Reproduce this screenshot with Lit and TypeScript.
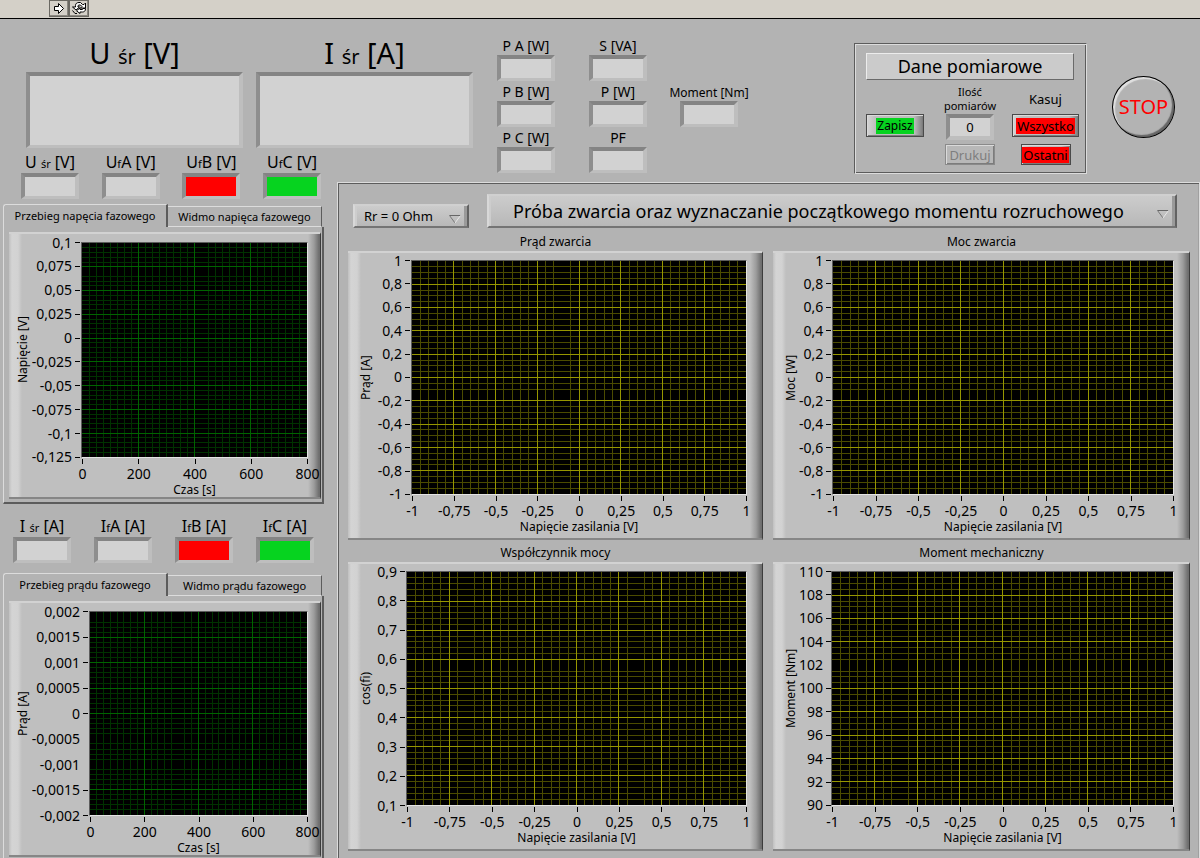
import { LitElement, html, svg, css, nothing } from "lit";
import { customElement, property } from "lit/decorators.js";
import { classMap } from "lit/directives/class-map.js";
import { styleMap } from "lit/directives/style-map.js";

interface Axis {
  title: string;
  labels: string[];
  /** minor intervals between two labelled values */
  minor: number;
  /** grid lines that are not painted, counted in minor steps */
  skip: number[];
}

interface GraphSpec {
  x: Axis;
  y: Axis;
  /** width of the strip left of the plot, frame included */
  gutter: number;
  tone: "green" | "yellow";
}

const voltageAxis = (skip: number[]): Axis => ({
  title: "Napięcie zasilania [V]",
  labels: ["-1", "-0,75", "-0,5", "-0,25", "0", "0,25", "0,5", "0,75", "1"],
  minor: 5,
  skip,
});

const timeAxis = (skip: number[]): Axis => ({
  title: "Czas [s]",
  labels: ["0", "200", "400", "600", "800"],
  minor: 8,
  skip,
});

const unitLabels = ["1", "0,8", "0,6", "0,4", "0,2", "0", "-0,2", "-0,4", "-0,6", "-0,8", "-1"];

const phaseVoltage: GraphSpec = {
  x: timeAxis([17]),
  y: {
    title: "Napięcie [V]",
    labels: ["0,1", "0,075", "0,05", "0,025", "0", "-0,025", "-0,05", "-0,075", "-0,1", "-0,125"],
    minor: 5,
    skip: [6],
  },
  gutter: 72,
  tone: "green",
};

const phaseCurrent: GraphSpec = {
  x: timeAxis([13]),
  y: {
    title: "Prąd [A]",
    labels: ["0,002", "0,0015", "0,001", "0,0005", "0", "-0,0005", "-0,001", "-0,0015", "-0,002"],
    minor: 5,
    skip: [1, 25, 30],
  },
  gutter: 80,
  tone: "green",
};

const charts: { title: string; spec: GraphSpec }[] = [
  {
    title: "Prąd zwarcia",
    spec: { x: voltageAxis([18]), y: { title: "Prąd [A]", labels: unitLabels, minor: 4, skip: [23] }, gutter: 63, tone: "yellow" },
  },
  {
    title: "Moc zwarcia",
    spec: { x: voltageAxis([]), y: { title: "Moc [W]", labels: unitLabels, minor: 4, skip: [23] }, gutter: 59, tone: "yellow" },
  },
  {
    title: "Współczynnik mocy",
    spec: {
      x: voltageAxis([7, 27]),
      y: { title: "cos(fi)", labels: ["0,9", "0,8", "0,7", "0,6", "0,5", "0,4", "0,3", "0,2", "0,1"], minor: 5, skip: [16] },
      gutter: 58,
      tone: "yellow",
    },
  },
  {
    title: "Moment mechaniczny",
    spec: {
      x: voltageAxis([8]),
      y: {
        title: "Moment [Nm]",
        labels: ["110", "108", "106", "104", "102", "100", "98", "96", "94", "92", "90"],
        minor: 4,
        skip: [16],
      },
      gutter: 58,
      tone: "yellow",
    },
  },
];

@customElement("xy-graph")
export class XyGraph extends LitElement {
  @property({ attribute: false }) declare spec: GraphSpec;

  static styles = css`
    :host {
      display: block;
    }
    .frame {
      box-sizing: border-box;
      height: 100%;
      display: grid;
      grid-template-rows: 1fr auto auto;
      border-top: 2px solid #d2d2d2;
      border-right: 1px solid #3c3c3c;
      border-bottom: 2px solid #868686;
      background:
        linear-gradient(to right, #c0c0c0, #d4d4d4 3px, #d2d2d2 9px, #bfbfbf 13px) left / 14px 100% no-repeat,
        linear-gradient(to right, #bfbfbf, #9c9c9c 6px, #6e6e6e 11px) right / 12px 100% no-repeat,
        #bfbfbf;
      font: 14px/16px "Noto Sans", sans-serif;
      color: #000;
    }
    .frame.yellow {
      padding: 7px 15px 4px 0;
    }
    .frame.green {
      padding: 8px 12px 0 0;
    }
    .left {
      display: flex;
      min-width: 0;
      padding-left: 10px;
    }
    .green .left {
      padding-left: 6px;
    }
    .ytitle {
      writing-mode: vertical-rl;
      transform: rotate(180deg);
      text-align: center;
      font-size: 12px;
      line-height: 16px;
      white-space: nowrap;
    }
    .yaxis {
      flex: 1;
      display: flex;
      flex-direction: column;
      justify-content: space-between;
    }
    .ylabel {
      height: 1px;
      display: flex;
      align-items: center;
      justify-content: flex-end;
      gap: 3px;
      white-space: nowrap;
    }
    .ytick {
      width: 5px;
      height: 1px;
      margin-right: 1px;
      background: #000;
    }
    .off {
      background: none;
    }
    .plot {
      border: 1px solid;
      border-color: #5c5c5c #e4e4e4 #e4e4e4 #5c5c5c;
      background: #000;
      min-height: 0;
    }
    svg {
      display: block;
      width: 100%;
      height: 100%;
    }
    .fine,
    .bold {
      stroke-width: 1;
      shape-rendering: crispEdges;
    }
    .green .fine {
      stroke: #003200;
    }
    .green .bold {
      stroke: #006400;
    }
    .yellow .fine {
      stroke: #4b4b00;
    }
    .yellow .bold {
      stroke: #969600;
    }
    .xaxis {
      grid-column: 2;
      display: flex;
      justify-content: space-between;
      padding: 1px 0 0 1px;
      height: 24px;
      box-sizing: border-box;
    }
    .xlabel {
      width: 1px;
      display: flex;
      flex-direction: column;
      align-items: center;
      gap: 2px;
      white-space: nowrap;
    }
    .xtick {
      width: 1px;
      height: 5px;
      flex: none;
      background: #000;
    }
    .xtitle {
      grid-column: 2;
      text-align: center;
      font-size: 12px;
      line-height: 15px;
      white-space: nowrap;
    }
  `;

  private lines(axis: Axis, vertical: boolean, bold: boolean) {
    const total = (axis.labels.length - 1) * axis.minor;
    return Array.from({ length: total - 1 }, (_, i) => i + 1)
      .filter((i) => !axis.skip.includes(i) && (i % axis.minor === 0) === bold)
      .map((i) => {
        const at = `${(i / total) * 100}%`;
        const cls = bold ? "bold" : "fine";
        return vertical
          ? svg`<line class=${cls} x1=${at} x2=${at} y1="0" y2="100%"></line>`
          : svg`<line class=${cls} y1=${at} y2=${at} x1="0" x2="100%"></line>`;
      });
  }

  render() {
    const { x, y, gutter, tone } = this.spec;
    return html`
      <div class="frame ${tone}" style=${styleMap({ gridTemplateColumns: `${gutter}px minmax(0, 1fr)` })}>
        <div class="left">
          <div class="ytitle">${y.title}</div>
          <div class="yaxis">
            ${y.labels.map(
              (label, i) => html`
                <div class="ylabel">
                  <span>${label}</span>
                  <span class=${classMap({ ytick: true, off: y.skip.includes(i * y.minor) })}></span>
                </div>
              `
            )}
          </div>
        </div>
        <div class="plot">
          <svg aria-hidden="true">
            ${this.lines(x, true, false)} ${this.lines(y, false, false)}
            ${this.lines(x, true, true)} ${this.lines(y, false, true)}
          </svg>
        </div>
        <div class="xaxis">
          ${x.labels.map((label) => html`<div class="xlabel"><span class="xtick"></span><span>${label}</span></div>`)}
        </div>
        <div class="xtitle">${x.title}</div>
      </div>
    `;
  }
}

type Tone = "" | "red" | "green";

const sub = (lead: string, small: string, tail: string) => html`${lead}<small>${small}</small>${tail}`;

@customElement("app-root")
export class AppRoot extends LitElement {
  static styles = css`
    :host {
      display: flex;
      flex-direction: column;
      height: 100vh;
      overflow: hidden;
      background: #b3b3b3;
      color: #000;
      font: 14px/16px "Noto Sans", sans-serif;
    }
    button,
    input,
    select {
      font: inherit;
      color: inherit;
      margin: 0;
      padding: 0;
      border-radius: 0;
      box-sizing: border-box;
    }
    .toolbar {
      flex: none;
      display: flex;
      height: 18px;
      padding-left: 49px;
      background: #d4d0c8;
      border-bottom: 1px solid #000;
    }
    .tool {
      width: 20px;
      height: 17px;
      border: 1px solid;
      border-color: #d4d0c8 #404040 #404040 #f4f2ee;
      border-top: 0;
      background: #d4d0c8;
      box-shadow: inset -1px -1px 0 #8a8780;
      outline: 1px solid #6a6862;
      outline-offset: -1px;
    }
    .tool svg {
      display: block;
      margin: 0 auto;
    }
    .desk {
      flex: 1;
      min-height: 0;
      display: grid;
      grid-template-columns: 337px 137px minmax(0, 1fr);
      grid-template-rows: 129px 34px minmax(0, 1fr);
    }
    .displays {
      grid-area: 1 / 1 / 2 / 3;
      display: flex;
      gap: 13px;
      padding: 15px 0 0 26px;
      align-items: flex-start;
    }
    .side {
      grid-area: 2 / 1 / 4 / 2;
      padding: 5px 13px 0 3px;
    }
    .header {
      grid-area: 1 / 3 / 3 / 4;
      display: flex;
      align-items: flex-start;
      padding: 0 25px 0 23px;
    }
    .panel {
      grid-area: 3 / 2 / 4 / 4;
    }

    /* numeric indicators */
    .ind {
      display: flex;
      flex-direction: column;
      align-items: center;
      width: 58px;
      font-size: 16px;
      line-height: 19px;
      white-space: nowrap;
    }
    .ind small {
      font-size: 11px;
    }
    .ind input {
      width: 58px;
      height: 26px;
      text-align: center;
      border: solid;
      border-width: 4px 4px 3px 4px;
      border-color: #848484 #bebebe #bebebe #8e8e8e;
      background: #d2d2d2;
      outline: none;
      font-size: 13px;
    }
    .ind .red {
      background: #ff0000;
    }
    .ind .green {
      background: #06d31f;
    }
    .ind.big {
      width: 217px;
      font-size: 29px;
      line-height: 38px;
    }
    .ind.big span {
      height: 38px;
    }
    .ind.big small {
      font-size: 20px;
    }
    .ind.big input {
      width: 217px;
      height: 76px;
    }
    .ind.note {
      font-size: 12px;
      line-height: 16px;
      width: 76px;
      margin: 66px 0 0 24px;
    }
    .readings {
      display: grid;
      grid-template-columns: 58px 58px;
      gap: 1px 34px;
      padding-top: 17px;
    }
    .readings .ind {
      font-size: 14px;
    }

    /* measurement data box */
    .data {
      box-sizing: border-box;
      width: 233px;
      margin: 24px 25px 0 auto;
      border: 1px solid;
      border-color: #5c5c5c #dcdcdc #dcdcdc #5c5c5c;
      box-shadow: inset 1px 1px 0 #dcdcdc, inset -1px -1px 0 #5c5c5c;
      padding: 9px 7px 8px 11px;
      display: grid;
      grid-template-columns: 62px minmax(0, 1fr) 67px;
      grid-template-rows: 27px 33px 27px 25px;
      column-gap: 8px;
      justify-items: center;
      align-items: end;
    }
    .data h1 {
      grid-column: 1 / -1;
      justify-self: stretch;
      align-self: start;
      box-sizing: border-box;
      height: 27px;
      margin: 0 5px 0 0;
      border: 1px solid;
      border-color: #ececec #6a6a6a #6a6a6a #ececec;
      background: #cbcbcb;
      font-size: 18px;
      font-weight: 400;
      line-height: 25px;
      text-align: center;
    }
    .count {
      grid-area: 2 / 2;
      font-size: 11px;
      line-height: 14px;
      text-align: center;
    }
    .clear {
      grid-area: 2 / 3;
      padding-bottom: 6px;
      font-size: 13px;
    }
    .data input {
      grid-area: 3 / 2;
      width: 48px;
      height: 26px;
      text-align: center;
      border: solid;
      border-width: 4px;
      border-color: #848484 #bebebe #bebebe #8e8e8e;
      background: #d2d2d2;
      outline: none;
      font-size: 13px;
    }
    .btn {
      height: 23px;
      border: 1px solid #4a4a4a;
      background: linear-gradient(to right, #d4d4d4, #bdbdbd 9px, #bdbdbd calc(100% - 9px), #7c7c7c);
      box-shadow: inset 1px 1px 0 #dadada, inset -1px -1px 0 #7c7c7c;
      line-height: 16px;
      display: flex;
      align-items: center;
      justify-content: center;
    }
    .btn span {
      padding: 0 1px;
    }
    .save {
      grid-area: 3 / 1;
      justify-self: start;
      width: 58px;
      margin-bottom: 3px;
      font-size: 12px;
    }
    .all {
      grid-area: 3 / 3;
      width: 67px;
      margin-bottom: 3px;
      font-size: 13px;
    }
    .print {
      grid-area: 4 / 2;
      width: 50px;
      height: 21px;
      border-color: #8a8a8a;
      background: #b8b8b8;
      color: #7e7e7e;
      font-size: 13px;
    }
    .last {
      grid-area: 4 / 3;
      width: 50px;
      height: 21px;
      font-size: 13px;
    }
    .save span {
      background: #06d31f;
    }
    .all span,
    .last span {
      background: #ff0000;
    }
    .stop {
      width: 63px;
      height: 62px;
      margin-top: 57px;
      border: 1px solid #000;
      border-radius: 50%;
      background: #b3b3b3;
      box-shadow: inset 2px 2px 1px #e0e0e0, inset -2px -2px 1px #666;
      color: #ff0000;
      font-size: 20px;
      line-height: 24px;
    }

    /* left column */
    .phases {
      display: flex;
      justify-content: space-between;
      padding: 0 3px 0 18px;
      margin-bottom: 5px;
    }
    .phases.shift {
      padding: 0 10px 0 10px;
      margin: 13px 0 10px;
    }
    .tabs {
      display: grid;
      grid-template-columns: 165px minmax(0, 1fr);
      align-items: end;
      margin-right: 2px;
    }
    .tab {
      height: 21px;
      border: 1px solid;
      border-color: #dcdcdc #5c5c5c #dcdcdc #dcdcdc;
      border-left: 0;
      background: #b3b3b3;
      font-size: 11px;
      line-height: 18px;
      white-space: nowrap;
    }
    .tab.on {
      height: 23px;
      border-left: 1px solid #dcdcdc;
      border-right: 2px solid #5c5c5c;
      border-bottom: 0;
      border-top-left-radius: 3px;
    }
    .page {
      border: solid;
      border-width: 0 2px 2px 1px;
      border-color: #dcdcdc #5c5c5c #5c5c5c #dcdcdc;
      padding: 5px 1px 3px 5px;
    }
    .page xy-graph {
      height: 267px;
    }
    .page.short xy-graph {
      height: 256px;
    }

    /* right panel */
    .panel {
      border: 1px solid;
      border-color: #dcdcdc #dcdcdc transparent #dcdcdc;
      border-bottom: 0;
      box-shadow: inset 1px 1px 0 #5c5c5c, inset -1px 0 0 #a0a0a0;
      padding: 11px 9px 0 10px;
      min-height: 0;
      overflow: hidden;
    }
    .pickers {
      display: flex;
      align-items: flex-end;
      gap: 18px;
      padding: 0 13px 0 5px;
      margin-bottom: 4px;
    }
    .picker {
      position: relative;
      display: flex;
    }
    .picker select {
      appearance: none;
      width: 100%;
      height: 24px;
      padding-left: 9px;
      border: solid;
      border-width: 2px;
      border-color: #d0d0d0 #626262 #747474 #d8d8d8;
      background: linear-gradient(#cccccc, #b8b8b8);
      box-shadow: inset 2px 0 0 #cdcdcd, inset -3px 0 0 #9a9a9a;
      font-size: 13px;
      outline: none;
    }
    .picker svg {
      position: absolute;
      right: 7px;
      bottom: 4px;
      pointer-events: none;
    }
    .load {
      flex: 0 0 116px;
    }
    .test {
      flex: 1;
      min-width: 0;
    }
    .test select {
      height: 34px;
      padding-left: 24px;
      font-size: 18px;
      line-height: 28px;
    }
    .test svg {
      bottom: 9px;
    }
    .charts {
      display: grid;
      grid-template-columns: minmax(0, 415fr) minmax(0, 417fr);
      column-gap: 10px;
      row-gap: 3px;
    }
    .chart h2 {
      margin: 0;
      font-size: 12px;
      font-weight: 400;
      line-height: 19px;
      text-align: center;
    }
    .chart xy-graph {
      height: 289px;
    }
  `;

  private indicator(label: unknown, tone: Tone = "", extra = "") {
    return html`
      <label class="ind ${extra}">
        <span>${label}</span>
        <input class=${tone || nothing} type="text" readonly />
      </label>
    `;
  }

  private tabs(active: string, other: string) {
    return html`
      <div class="tabs" role="tablist">
        <button class="tab on" type="button" role="tab" aria-selected="true">${active}</button>
        <button class="tab" type="button" role="tab" aria-selected="false">${other}</button>
      </div>
    `;
  }

  private arrow() {
    return html`<svg width="14" height="10" viewBox="0 0 14 10" aria-hidden="true">
      <path d="M1.5 1.5H12.5" stroke="#666" fill="none" />
      <path d="M1.5 1.5L7 9" stroke="#777" fill="none" />
      <path d="M12.5 1.5L7 9" stroke="#e6e6e6" fill="none" />
    </svg>`;
  }

  render() {
    return html`
      <div class="toolbar">
        <button class="tool" type="button" aria-label="Run">
          <svg width="12" height="13" viewBox="0 0 12 13">
            <path d="M1.5 4.5H5.5V1.5L10.5 6.5L5.5 11.5V8.5H1.5Z" fill="#fff" stroke="#000" />
          </svg>
        </button>
        <button class="tool" type="button" aria-label="Run Continuously">
          <svg width="16" height="14" viewBox="0 0 16 14">
            <path
              d="M4.5 6V4.5C4.5 2.5 6 1.5 8 1.5H9.5L11.5 3.5H13L14.5 2V7H9.5L11 5.5L9.5 4H8C7.5 4 7 4.5 7 5V6H8.5L5 9L1.5 6Z"
              fill="#fff"
              stroke="#000"
            />
            <path
              d="M14.5 8C14.5 10 13 11 11.5 11H9V12.5L5.5 9.8L9 7V8.5H11C11.8 8.5 12 8 12 7.5H14.5Z"
              fill="#fff"
              stroke="#000"
            />
            <path d="M1.5 9.5L4 12.5H6" fill="none" stroke="#000" />
          </svg>
        </button>
      </div>

      <main class="desk">
        <div class="displays">
          ${this.indicator(sub("U ", "śr", " [V]"), "", "big")} ${this.indicator(sub("I ", "śr", " [A]"), "", "big")}
        </div>

        <div class="header">
          <div class="readings">
            ${["P A [W]", "S [VA]", "P B [W]", "P [W]", "P C [W]", "PF"].map((t) => this.indicator(t))}
          </div>
          ${this.indicator("Moment [Nm]", "", "note")}
          <section class="data">
            <h1>Dane pomiarowe</h1>
            <label class="count" for="count">Ilość<br />pomiarów</label>
            <span class="clear">Kasuj</span>
            <button class="btn save" type="button"><span>Zapisz</span></button>
            <input id="count" type="text" readonly .value=${"0"} />
            <button class="btn all" type="button"><span>Wszystko</span></button>
            <button class="btn print" type="button" disabled><span>Drukuj</span></button>
            <button class="btn last" type="button"><span>Ostatni</span></button>
          </section>
          <button class="stop" type="button">STOP</button>
        </div>

        <div class="side">
          <div class="phases">
            ${this.indicator(sub("U ", "śr", " [V]"))} ${this.indicator(sub("U", "f", "A [V]"))}
            ${this.indicator(sub("U", "f", "B [V]"), "red")} ${this.indicator(sub("U", "f", "C [V]"), "green")}
          </div>
          ${this.tabs("Przebieg napęcia fazowego", "Widmo napięca fazowego")}
          <div class="page"><xy-graph .spec=${phaseVoltage}></xy-graph></div>

          <div class="phases shift">
            ${this.indicator(sub("I ", "śr", " [A]"))} ${this.indicator(sub("I", "f", "A [A]"))}
            ${this.indicator(sub("I", "f", "B [A]"), "red")} ${this.indicator(sub("I", "f", "C [A]"), "green")}
          </div>
          ${this.tabs("Przebieg prądu fazowego", "Widmo prądu fazowego")}
          <div class="page short"><xy-graph .spec=${phaseCurrent}></xy-graph></div>
        </div>

        <div class="panel">
          <div class="pickers">
            <div class="picker load">
              <select aria-label="Rr">
                <option>Rr = 0 Ohm</option>
              </select>
              ${this.arrow()}
            </div>
            <div class="picker test">
              <select aria-label="Próba">
                <option>Próba zwarcia oraz wyznaczanie początkowego momentu rozruchowego</option>
              </select>
              ${this.arrow()}
            </div>
          </div>
          <div class="charts">
            ${charts.map(
              ({ title, spec }) => html`
                <section class="chart">
                  <h2>${title}</h2>
                  <xy-graph .spec=${spec}></xy-graph>
                </section>
              `
            )}
          </div>
        </div>
      </main>
    `;
  }
}
